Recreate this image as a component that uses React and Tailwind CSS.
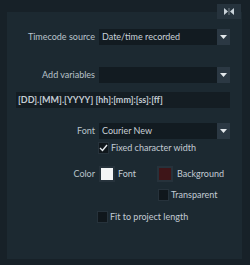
import React from 'react';

const Dropdown = ({ value }) => (
  <div className="flex h-4 w-[131px] items-stretch bg-[#121b21]">
    <span className="flex-1 truncate pl-[3px] leading-4 text-[#c9d1d8]">{value}</span>
    <span className="flex w-[13px] items-center justify-center bg-[#2b3843]">
      <svg width="7" height="4" viewBox="0 0 7 4">
        <path d="M0 0h7L3.5 4z" fill="#e3e8ec" />
      </svg>
    </span>
  </div>
);

const Check = ({ checked }) => (
  <span className="flex h-[10px] w-[9px] items-center justify-center bg-[#10171c] ring-1 ring-[#26323b]">
    {checked && (
      <svg width="9" height="8" viewBox="0 0 9 8">
        <path d="M1 4l2.5 2.5L8 1" stroke="#e6ebef" strokeWidth="1.4" fill="none" />
      </svg>
    )}
  </span>
);

const Swatch = ({ color }) => (
  <span className="flex h-4 w-4 items-center justify-center bg-[#26323b]">
    <span className={`h-3 w-3 ${color}`} />
  </span>
);

const Row = ({ label, children, className = '' }) => (
  <div className={`flex items-center ${className}`}>
    <span className="w-[92px] pr-1 text-right text-[#b9c3cb]">{label}</span>
    {children}
  </div>
);

export default function App() {
  return (
    <div
      className="relative h-[265px] w-[250px] bg-[#172128] pt-3 text-[9px] leading-3"
      style={{ fontFamily: 'Lato, "Open Sans", sans-serif' }}
    >
      <button className="absolute right-[9px] top-[4px] flex h-[15px] w-[24px] items-center justify-center bg-[#26333d]">
        <svg width="10" height="7" viewBox="0 0 10 7">
          <path d="M0 0l4 3.5L0 7z M10 0L6 3.5 10 7z" fill="#c9d2d9" />
          <rect x="4.5" y="0" width="1" height="7" fill="#c9d2d9" opacity="0.5" />
        </svg>
      </button>
      <div className="ml-[7px] h-[247px] w-[235px] bg-[#1c2931] pt-[17px]">
        <Row label="Timecode source">
          <Dropdown value="Date/time recorded" />
        </Row>
        <Row label="Add variables" className="mt-[22px]">
          <Dropdown value="" />
        </Row>
        <div className="ml-[9px] mt-[9px] h-4 w-[214px] truncate bg-[#141d23] pl-[2px] font-bold leading-4 text-[#c3ccd4]">
          [DD].[MM].[YYYY] [hh]:[mm]:[ss]:[ff]
        </div>
        <Row label="Font" className="mt-[15px]">
          <Dropdown value="Courier New" />
        </Row>
        <div className="ml-[92px] mt-[3px] flex h-3 items-center gap-[3px] text-[#c3ccd4]">
          <Check checked />
          <span>Fixed character width</span>
        </div>
        <Row label="Color" className="mt-[12px]">
          <Swatch color="bg-[#f4f5f6]" />
          <span className="ml-[3px] w-[39px] text-[#c3ccd4]">Font</span>
          <Swatch color="bg-[#3e1518]" />
          <span className="ml-[4px] text-[#c3ccd4]">Background</span>
        </Row>
        <div className="ml-[152px] mt-[7px] flex h-3 items-center gap-[3px] text-[#c3ccd4]">
          <Check />
          <span>Transparent</span>
        </div>
        <div className="ml-[91px] mt-[10px] flex h-3 items-center gap-[3px] text-[#c3ccd4]">
          <Check />
          <span>Fit to project length</span>
        </div>
      </div>
    </div>
  );
}
